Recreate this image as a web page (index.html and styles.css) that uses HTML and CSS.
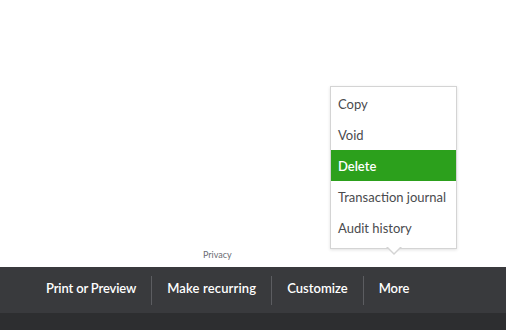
FILE: index.html
```html
<!DOCTYPE html>
<html>
<head>
<meta charset="utf-8">
<link rel="stylesheet" href="styles.css">
</head>
<body>
<div class="page">
  <div class="content">
    <div class="menu-wrap">
      <ul class="menu">
        <li class="item">Copy</li>
        <li class="item">Void</li>
        <li class="item active">Delete</li>
        <li class="item">Transaction journal</li>
        <li class="item">Audit history</li>
      </ul>
      <div class="arrow"></div>
    </div>
    <div class="privacy">Privacy</div>
  </div>
  <div class="footer">
    <div class="bar">
      <span class="btn btn-tight">Print or Preview</span>
      <span class="sep"></span>
      <span class="btn btn-wide">Make recurring</span>
      <span class="sep"></span>
      <span class="btn">Customize</span>
      <span class="sep"></span>
      <span class="btn">More</span>
    </div>
    <div class="bottom"></div>
  </div>
</div>
</body>
</html>
```
FILE: styles.css
```css
* { box-sizing: border-box; }
html, body { margin: 0; padding: 0; }
body {
  width: 506px;
  height: 330px;
  overflow: hidden;
  background: #fff;
  font-family: Lato, "Noto Sans", sans-serif;
}
.page {
  display: flex;
  flex-direction: column;
  height: 330px;
}
.content {
  position: relative;
  height: 267px;
}
.menu-wrap {
  position: absolute;
  left: 330px;
  top: 86px;
  width: 127px;
}
.menu {
  list-style: none;
  margin: 0;
  padding: 1px 0 5px;
  background: #fff;
  border: 1px solid #d4d4d4;
  box-shadow: 0 1px 3px rgba(0,0,0,0.12);
}
.item {
  height: 31px;
  line-height: 32px;
  padding-left: 7px;
  font-size: 13px;
  color: #4a4b4e;
  white-space: nowrap;
}
.item.active {
  background: #2ca01c;
  color: #fff;
  font-weight: 600;
}
.arrow {
  position: absolute;
  left: 56px;
  top: 161px;
  width: 0;
  height: 0;
  border-left: 8px solid transparent;
  border-right: 8px solid transparent;
  border-top: 8px solid #d4d4d4;
}
.arrow::after {
  content: "";
  position: absolute;
  left: -7px;
  top: -9px;
  border-left: 7px solid transparent;
  border-right: 7px solid transparent;
  border-top: 7px solid #fff;
}
.privacy {
  position: absolute;
  left: 203px;
  top: 249px;
  font-size: 9px;
  color: #6b6c72;
}
.footer {
  flex: 1;
  display: flex;
  flex-direction: column;
}
.bar {
  height: 46px;
  background: #393a3d;
  display: flex;
  align-items: center;
  padding: 0 0 4px 46px;
}
.btn {
  color: #fff;
  font-size: 13px;
  font-weight: 600;
}
.btn-tight { letter-spacing: -0.15px; }
.btn-wide { letter-spacing: 0.15px; }
.sep {
  width: 1px;
  height: 29px;
  background: #5c5d61;
  margin: 4px 15px 0;
}
.bottom {
  flex: 1;
  background: #2d2e30;
}
```
